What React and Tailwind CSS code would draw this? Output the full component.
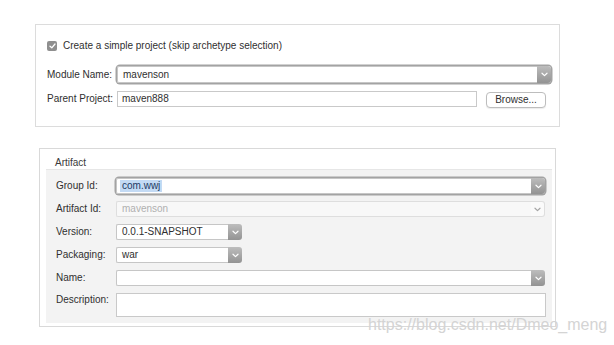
import React from 'react'

const Chevron = ({ color = '#ffffff' }) => (
    <svg width="7" height="5" viewBox="0 0 7 5" fill="none">
        <path d="M1 1.2 L3.5 3.6 L6 1.2" stroke={color} strokeWidth="1.2" strokeLinecap="round" strokeLinejoin="round" />
    </svg>
)

const Arrow = ({ disabled }) => (
    disabled ? (
        <div className="w-[14px] h-full flex items-center justify-center bg-[#fafafa] border border-l-0 border-[#dedede] rounded-r-[3px]">
            <Chevron color="#a5a5a5" />
        </div>
    ) : (
        <div className="w-[14px] h-full flex items-center justify-center bg-gradient-to-b from-[#bdbdbd] to-[#939393] rounded-r-[3px]">
            <Chevron />
        </div>
    )
)

const Combo = ({ value, focused, disabled, selected, className }) => (
    <div className={`flex h-[16px] rounded-[3px] ${focused ? 'shadow-[0_0_0_1.5px_#a3a3a3]' : ''} ${className}`}>
        <div className={`flex-1 flex items-center pl-[5px] border border-r-0 rounded-l-[2px] ${disabled ? 'bg-[#f8f8f8] border-[#dedede] text-[#b0b0b0]' : 'bg-white border-[#c6c6c6]'}`}>
            {selected ? (
                <span className="bg-[#c3daf4] text-[#1d3a63] px-[2px] -ml-[2px] leading-[12px]">{value}</span>
            ) : value}
        </div>
        <Arrow disabled={disabled} />
    </div>
)

const Field = ({ value, className }) => (
    <div className={`flex items-center pl-[4px] bg-white border border-[#c9c9c9] ${className}`}>
        {value}
    </div>
)

const Row = ({ label, children, top }) => (
    <div className={`flex ${top ? 'items-start' : 'items-center'}`}>
        <div className={`w-[60px] shrink-0 ${top ? 'pt-[1px]' : ''}`}>{label}</div>
        {children}
    </div>
)

export default function App() {
    return (
        <div className="relative w-[614px] h-[345px] bg-white pt-[24px] text-[10px] leading-[12px] text-[#2f2f2f] font-['Liberation_Sans',Arial,sans-serif]">

            <div className="ml-[35px] w-[525px] h-[103px] border border-[#dcdcdc] pl-[11px] pt-[15px]">
                <div className="flex items-center gap-[6px]">
                    <div className="w-[10px] h-[10px] rounded-[2px] bg-[#8f8f8f] flex items-center justify-center">
                        <svg width="7" height="6" viewBox="0 0 7 6" fill="none">
                            <path d="M1 3.2 L2.8 4.8 L6 1" stroke="#fff" strokeWidth="1.3" strokeLinecap="round" strokeLinejoin="round" />
                        </svg>
                    </div>
                    <span>Create a simple project (skip archetype selection)</span>
                </div>

                <div className="mt-[14px] flex items-center">
                    <div className="w-[70px] shrink-0">Module Name:</div>
                    <Combo value="mavenson" focused className="w-[434px] h-[17px]" />
                </div>

                <div className="mt-[7px] flex items-center">
                    <div className="w-[70px] shrink-0">Parent Project:</div>
                    <Field value="maven888" className="w-[360px] h-[16px]" />
                    <button className="ml-[9px] w-[60px] h-[16px] mt-[2px] bg-white border border-[#bdbdbd] rounded-[4px] shadow-[0_1px_1px_rgba(0,0,0,0.08)] text-[10px] leading-[12px] text-[#2f2f2f]">
                        Browse...
                    </button>
                </div>
            </div>

            <div className="ml-[39px] mt-[21px] w-[517px] h-[179px] border border-[#d9d9d9] bg-white">
                <div className="pl-[15px] pt-[8px] text-[#3a3a3a]">Artifact</div>
                <div className="ml-[6px] mr-[3px] h-[154px] bg-[#f3f3f3] border-t border-[#e6e6e6] pl-[10px] pr-[6px] pt-[8px] flex flex-col gap-[7px]">
                    <Row label="Group Id:">
                        <Combo value="com.wwj" focused selected className="w-[429px]" />
                    </Row>
                    <Row label="Artifact Id:">
                        <Combo value="mavenson" disabled className="w-[429px]" />
                    </Row>
                    <Row label="Version:">
                        <Combo value="0.0.1-SNAPSHOT" className="w-[126px]" />
                    </Row>
                    <Row label="Packaging:">
                        <Combo value="war" className="w-[126px]" />
                    </Row>
                    <Row label="Name:">
                        <Combo value="" className="w-[429px]" />
                    </Row>
                    <Row label="Description:" top>
                        <Field value="" className="w-[430px] h-[24px]" />
                    </Row>
                </div>
            </div>

            <div className="absolute left-[368px] top-[316px] text-[16px] leading-[18px] text-[#d4d4d4] font-['Liberation_Sans',Arial,sans-serif]">
                https://blog.csdn.net/Dmeo_meng
            </div>
        </div>
    )
}
